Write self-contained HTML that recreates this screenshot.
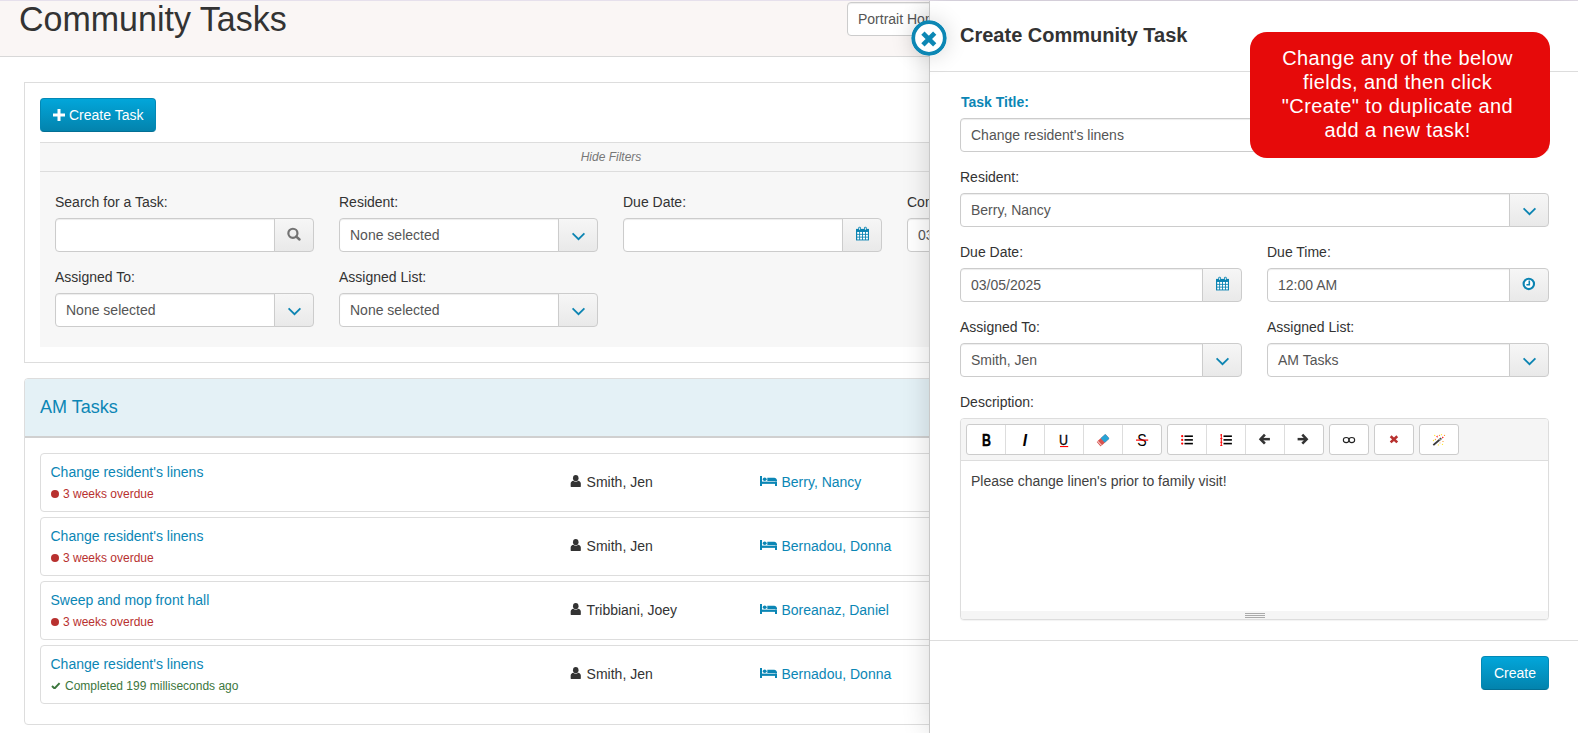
<!DOCTYPE html>
<html lang="en">
<head>
<meta charset="utf-8">
<title>Community Tasks</title>
<style>
*{box-sizing:border-box;margin:0;padding:0}
html,body{width:1578px;height:733px;overflow:hidden;background:#fff}
body{font-family:"Liberation Sans",Arial,Helvetica,sans-serif;font-size:14px;line-height:20px;color:#333;position:relative}
.abs{position:absolute}
.t{position:absolute;white-space:nowrap;line-height:20px}
.lbl{position:absolute;white-space:nowrap;line-height:20px;color:#333}
.inp{position:absolute;height:34px;border:1px solid #ccc;border-radius:4px;background:#fff;color:#555;padding:6px 10px;line-height:20px;white-space:nowrap;overflow:hidden;box-shadow:inset 0 1px 1px rgba(0,0,0,.075)}
.inp.grp{border-radius:4px 0 0 4px}
.addon{position:absolute;height:34px;width:40px;border:1px solid #ccc;border-radius:0 4px 4px 0;background:linear-gradient(#f6f6f6,#e9e9e9)}
.addon svg{position:absolute}
.blue{color:#0b86b5}
#topline{left:0;top:0;width:1578px;height:1px;background:#e6e0ec}
#hdr{left:0;top:1px;width:1578px;height:56px;background:#faf6f5;border-bottom:1px solid #d8d8d8}
#h1{left:19px;top:-1px;font-size:34px;line-height:40px;color:#333;transform:scaleY(1.055);transform-origin:0 31.800px}
#p1{left:24px;top:82px;width:1172px;height:281px;border:1px solid #ddd}
#btn1{left:40px;top:98px;width:116px;height:34px;border-radius:4px;border:1px solid #0388b5;border-bottom-color:#036f94;background:linear-gradient(#02a6da,#0383ad);color:#fff}
#fbar{left:40px;top:142px;width:1140px;height:30px;background:#f7f7f7;border-top:1px solid #ddd;border-bottom:1px solid #ddd}
#fbody{left:40px;top:172px;width:1140px;height:175px;background:#f7f7f7}
#p2{left:24px;top:378px;width:1172px;height:347px;border:1px solid #ddd;border-radius:4px}
#p2h{left:25px;top:379px;width:1170px;height:59px;background:#e4f1f6;border-bottom:2px solid #d0d0d0;border-radius:3px 3px 0 0}
.item{position:absolute;left:40px;width:1140px;height:59px;border:1px solid #ddd;border-radius:4px;background:#fff}
.red{color:#b8312f}
.green{color:#3c763d}
.sm{font-size:12px}
#side{left:929px;top:1px;width:649px;height:732px;background:#fff;border-left:1px solid #c8c8c8;box-shadow:0 0 26px rgba(0,0,0,.16)}
#sideline1{left:930px;top:71px;width:648px;height:1px;background:#ddd}
#sideline2{left:930px;top:640px;width:648px;height:1px;background:#ddd}
#close{left:910.900px;top:20.400px;width:36px;height:36px;border-radius:50%;box-shadow:0 0 22px rgba(0,0,0,.16)}
#callout{left:1250px;top:32px;width:300px;height:126px;border-radius:17px;background:#e60a0a;color:#fff;font-size:20px;line-height:24px;text-align:center;padding:13.900px 5px 0 0;letter-spacing:.41px}
#editor{left:960px;top:418px;width:589px;height:202px;border:1px solid #ddd;border-radius:4px;background:#fff;box-shadow:0 1px 1px rgba(0,0,0,.05)}
#tb{left:961px;top:419px;width:587px;height:42px;background:#f5f5f5;border-bottom:1px solid #ddd;border-radius:3px 3px 0 0}
#rs{left:961px;top:611px;width:587px;height:8px;background:#f5f5f5;border-radius:0 0 3px 3px}
.bg{position:absolute;top:424px;height:31px;border:1px solid #ccc;border-radius:3px;background:#fff;display:flex}
.bg i{display:block;width:39px;height:29px;border-left:1px solid #ddd;position:relative;font-style:normal}
.bg i:first-child{border-left:0;width:38px}
#btn2{left:1481px;top:656px;width:68px;height:34px;border-radius:4px;border:1px solid #0388b5;border-bottom-color:#036f94;background:linear-gradient(#02a6da,#0383ad);color:#fff}
</style>
</head>
<body>
<div class="abs" id="topline"></div>
<div class="abs" id="hdr"></div>
<div class="t" id="h1">Community Tasks</div>
<div class="inp" style="left:847px;top:2px;width:200px">Portrait Homes</div>

<div class="abs" id="p1"></div>
<div class="abs" id="btn1"><span class="t" style="left:28px;top:6px">Create Task</span>
<svg class="abs" style="left:12px;top:10px" width="12" height="12" viewBox="0 0 12 12"><path d="M4.5 0h3v4.5H12v3H7.500V12h-3V7.500H0v-3h4.500z" fill="#fff"/></svg></div>
<div class="abs" id="fbar"></div>
<div class="t" style="left:580.700px;top:147px;font-size:12px;font-style:italic;color:#777">Hide Filters</div>
<div class="abs" id="fbody"></div>

<div class="lbl" style="left:55px;top:192px">Search for a Task:</div>
<div class="inp grp" style="left:55px;top:218px;width:220px"></div>
<div class="addon" style="left:274px;top:218px"><svg style="left:11px;top:7px" width="17" height="17" viewBox="0 0 17 17"><circle cx="6.900" cy="7.300" r="4.550" fill="none" stroke="#737373" stroke-width="2.200"/><path d="M10.300 10.600L13.500 13.500" stroke="#737373" stroke-width="2.500" stroke-linecap="round"/></svg></div>
<div class="lbl" style="left:339px;top:192px">Resident:</div>
<div class="inp grp" style="left:339px;top:218px;width:220px">None selected</div>
<div class="addon" style="left:558px;top:218px"><svg style="left:12px;top:12.600px" width="15" height="9" viewBox="0 0 15 9"><path d="M1.6 1.3L7.500 7.200L13.400 1.3" fill="none" stroke="#0c84b2" stroke-width="1.750"/></svg></div>
<div class="lbl" style="left:623px;top:192px">Due Date:</div>
<div class="inp grp" style="left:623px;top:218px;width:220px"></div>
<div class="addon" style="left:842px;top:218px"><svg style="left:11.600px;top:6.900px" width="15" height="15.400" viewBox="0 0 15 16" preserveAspectRatio="none"><path d="M1 3h13v12H1z" fill="#0c84b2"/><rect x="3.300" y="0.800" width="2.600" height="4" rx="1.200" fill="#0c84b2"/><rect x="9.100" y="0.800" width="2.600" height="4" rx="1.200" fill="#0c84b2"/><rect x="4.100" y="1.700" width="1" height="2.300" fill="#dbeef5"/><rect x="9.900" y="1.700" width="1" height="2.300" fill="#dbeef5"/><g fill="#fff"><rect x="2.200" y="6.200" width="2" height="2"/><rect x="5.100" y="6.200" width="2" height="2"/><rect x="8" y="6.200" width="2" height="2"/><rect x="10.900" y="6.200" width="2" height="2"/><rect x="2.200" y="9.100" width="2" height="2"/><rect x="5.100" y="9.100" width="2" height="2"/><rect x="8" y="9.100" width="2" height="2"/><rect x="10.900" y="9.100" width="2" height="2"/><rect x="2.200" y="12" width="2" height="2"/><rect x="5.100" y="12" width="2" height="2"/><rect x="8" y="12" width="2" height="2"/><rect x="10.900" y="12" width="2" height="2"/></g></svg></div>
<div class="lbl" style="left:907px;top:192px">Completed:</div>
<div class="inp grp" style="left:907px;top:218px;width:220px">03/05/2025</div>

<div class="lbl" style="left:55px;top:267px">Assigned To:</div>
<div class="inp grp" style="left:55px;top:293px;width:220px">None selected</div>
<div class="addon" style="left:274px;top:293px"><svg style="left:12px;top:12.600px" width="15" height="9" viewBox="0 0 15 9"><path d="M1.6 1.3L7.500 7.200L13.400 1.3" fill="none" stroke="#0c84b2" stroke-width="1.750"/></svg></div>
<div class="lbl" style="left:339px;top:267px">Assigned List:</div>
<div class="inp grp" style="left:339px;top:293px;width:220px">None selected</div>
<div class="addon" style="left:558px;top:293px"><svg style="left:12px;top:12.600px" width="15" height="9" viewBox="0 0 15 9"><path d="M1.6 1.3L7.500 7.200L13.400 1.3" fill="none" stroke="#0c84b2" stroke-width="1.750"/></svg></div>

<div class="abs" id="p2"></div>
<div class="abs" id="p2h"></div>
<div class="t blue" style="left:40px;top:396px;font-size:18px;line-height:22px">AM Tasks</div>

<div class="item" style="top:453px"></div>
<div class="t blue" style="left:50.500px;top:462px">Change resident's linens</div>
<div class="abs" style="left:51px;top:490px;width:8px;height:8px;border-radius:50%;background:#b8312f"></div><div class="t red sm" style="left:63px;top:484px">3 weeks overdue</div>
<svg class="abs" style="left:570px;top:475px" width="11.500" height="12" viewBox="0 0 12 13"><ellipse cx="6" cy="3.400" rx="3" ry="3.300" fill="#333"/><path d="M0.500 12.500V9.200C0.500 7.400 1.800 6.300 3.400 6.100C4.100 6.800 5 7.200 6 7.200S7.900 6.800 8.600 6.100C10.200 6.300 11.500 7.400 11.500 9.200V12.500C11.500 12.800 11.300 13 11 13H1C0.700 13 0.500 12.800 0.500 12.500Z" fill="#333"/></svg><div class="t" style="left:586.600px;top:472px">Smith, Jen</div>
<svg class="abs" style="left:760px;top:475.7px" width="17" height="10.300" viewBox="0 0 17 11" preserveAspectRatio="none"><g fill="#0b86b5"><rect x="0" y="0" width="2" height="11"/><rect x="0" y="6" width="17" height="2.400"/><rect x="15" y="6" width="2" height="5"/><circle cx="4.700" cy="3.500" r="1.950"/><path d="M7.300 2H14.300C15.400 2 17 3.600 17 4.600V5.300H7.300Z"/></g></svg><div class="t blue" style="left:781.500px;top:472px">Berry, Nancy</div>
<div class="item" style="top:517px"></div>
<div class="t blue" style="left:50.500px;top:526px">Change resident's linens</div>
<div class="abs" style="left:51px;top:554px;width:8px;height:8px;border-radius:50%;background:#b8312f"></div><div class="t red sm" style="left:63px;top:548px">3 weeks overdue</div>
<svg class="abs" style="left:570px;top:539px" width="11.500" height="12" viewBox="0 0 12 13"><ellipse cx="6" cy="3.400" rx="3" ry="3.300" fill="#333"/><path d="M0.500 12.500V9.200C0.500 7.400 1.800 6.300 3.400 6.100C4.100 6.800 5 7.200 6 7.200S7.900 6.800 8.600 6.100C10.200 6.300 11.500 7.400 11.500 9.200V12.500C11.500 12.800 11.300 13 11 13H1C0.700 13 0.500 12.800 0.500 12.500Z" fill="#333"/></svg><div class="t" style="left:586.600px;top:536px">Smith, Jen</div>
<svg class="abs" style="left:760px;top:539.7px" width="17" height="10.300" viewBox="0 0 17 11" preserveAspectRatio="none"><g fill="#0b86b5"><rect x="0" y="0" width="2" height="11"/><rect x="0" y="6" width="17" height="2.400"/><rect x="15" y="6" width="2" height="5"/><circle cx="4.700" cy="3.500" r="1.950"/><path d="M7.300 2H14.300C15.400 2 17 3.600 17 4.600V5.300H7.300Z"/></g></svg><div class="t blue" style="left:781.500px;top:536px">Bernadou, Donna</div>
<div class="item" style="top:581px"></div>
<div class="t blue" style="left:50.500px;top:590px">Sweep and mop front hall</div>
<div class="abs" style="left:51px;top:618px;width:8px;height:8px;border-radius:50%;background:#b8312f"></div><div class="t red sm" style="left:63px;top:612px">3 weeks overdue</div>
<svg class="abs" style="left:570px;top:603px" width="11.500" height="12" viewBox="0 0 12 13"><ellipse cx="6" cy="3.400" rx="3" ry="3.300" fill="#333"/><path d="M0.500 12.500V9.200C0.500 7.400 1.800 6.300 3.400 6.100C4.100 6.800 5 7.200 6 7.200S7.900 6.800 8.600 6.100C10.200 6.300 11.500 7.400 11.500 9.200V12.500C11.500 12.800 11.300 13 11 13H1C0.700 13 0.500 12.800 0.500 12.500Z" fill="#333"/></svg><div class="t" style="left:586.600px;top:600px">Tribbiani, Joey</div>
<svg class="abs" style="left:760px;top:603.7px" width="17" height="10.300" viewBox="0 0 17 11" preserveAspectRatio="none"><g fill="#0b86b5"><rect x="0" y="0" width="2" height="11"/><rect x="0" y="6" width="17" height="2.400"/><rect x="15" y="6" width="2" height="5"/><circle cx="4.700" cy="3.500" r="1.950"/><path d="M7.300 2H14.300C15.400 2 17 3.600 17 4.600V5.300H7.300Z"/></g></svg><div class="t blue" style="left:781.500px;top:600px">Boreanaz, Daniel</div>
<div class="item" style="top:645px"></div>
<div class="t blue" style="left:50.500px;top:654px">Change resident's linens</div>
<svg class="abs" style="left:51px;top:681.600px" width="9.600" height="7.600" viewBox="0 0 10 8"><path d="M1 4.200L3.700 6.800L9 1.200" fill="none" stroke="#3c763d" stroke-width="2.100"/></svg><div class="t green sm" style="left:65px;top:676px">Completed 199 milliseconds ago</div>
<svg class="abs" style="left:570px;top:667px" width="11.500" height="12" viewBox="0 0 12 13"><ellipse cx="6" cy="3.400" rx="3" ry="3.300" fill="#333"/><path d="M0.500 12.500V9.200C0.500 7.400 1.800 6.300 3.400 6.100C4.100 6.800 5 7.200 6 7.200S7.900 6.800 8.600 6.100C10.200 6.300 11.500 7.400 11.500 9.200V12.500C11.500 12.800 11.300 13 11 13H1C0.700 13 0.500 12.800 0.500 12.500Z" fill="#333"/></svg><div class="t" style="left:586.600px;top:664px">Smith, Jen</div>
<svg class="abs" style="left:760px;top:667.7px" width="17" height="10.300" viewBox="0 0 17 11" preserveAspectRatio="none"><g fill="#0b86b5"><rect x="0" y="0" width="2" height="11"/><rect x="0" y="6" width="17" height="2.400"/><rect x="15" y="6" width="2" height="5"/><circle cx="4.700" cy="3.500" r="1.950"/><path d="M7.300 2H14.300C15.400 2 17 3.600 17 4.600V5.300H7.300Z"/></g></svg><div class="t blue" style="left:781.500px;top:664px">Bernadou, Donna</div>

<div class="abs" id="side"></div>
<div class="abs" id="sideline1"></div>
<div class="abs" id="sideline2"></div>
<div class="t" style="left:960px;top:23.400px;font-size:20px;font-weight:bold;line-height:24px">Create Community Task</div>

<svg class="abs" id="close" viewBox="0 0 36 36" width="36" height="36"><circle cx="18" cy="18" r="15.800" fill="#fff" stroke="#0c87b4" stroke-width="3.800"/><path d="M11.900 13.100L23.700 24.900M23.700 13.100L11.900 24.900" stroke="#0c87b4" stroke-width="4.600"/></svg>
<div class="lbl" style="left:961px;top:92px;font-weight:bold;color:#0b86b5">Task Title:</div>
<div class="inp" style="left:960px;top:118px;width:589px">Change resident's linens</div>
<div class="lbl" style="left:960px;top:167px">Resident:</div>
<div class="inp grp" style="left:960px;top:193px;width:550px">Berry, Nancy</div>
<div class="addon" style="left:1509px;top:193px"><svg style="left:12px;top:12.600px" width="15" height="9" viewBox="0 0 15 9"><path d="M1.6 1.3L7.500 7.200L13.400 1.3" fill="none" stroke="#0c84b2" stroke-width="1.750"/></svg></div>
<div class="lbl" style="left:960px;top:242px">Due Date:</div>
<div class="inp grp" style="left:960px;top:268px;width:243px">03/05/2025</div>
<div class="addon" style="left:1202px;top:268px"><svg style="left:11.600px;top:6.900px" width="15" height="15.400" viewBox="0 0 15 16" preserveAspectRatio="none"><path d="M1 3h13v12H1z" fill="#0c84b2"/><rect x="3.300" y="0.800" width="2.600" height="4" rx="1.200" fill="#0c84b2"/><rect x="9.100" y="0.800" width="2.600" height="4" rx="1.200" fill="#0c84b2"/><rect x="4.100" y="1.700" width="1" height="2.300" fill="#dbeef5"/><rect x="9.900" y="1.700" width="1" height="2.300" fill="#dbeef5"/><g fill="#fff"><rect x="2.200" y="6.200" width="2" height="2"/><rect x="5.100" y="6.200" width="2" height="2"/><rect x="8" y="6.200" width="2" height="2"/><rect x="10.900" y="6.200" width="2" height="2"/><rect x="2.200" y="9.100" width="2" height="2"/><rect x="5.100" y="9.100" width="2" height="2"/><rect x="8" y="9.100" width="2" height="2"/><rect x="10.900" y="9.100" width="2" height="2"/><rect x="2.200" y="12" width="2" height="2"/><rect x="5.100" y="12" width="2" height="2"/><rect x="8" y="12" width="2" height="2"/><rect x="10.900" y="12" width="2" height="2"/></g></svg></div>
<div class="lbl" style="left:1267px;top:242px">Due Time:</div>
<div class="inp grp" style="left:1267px;top:268px;width:243px">12:00 AM</div>
<div class="addon" style="left:1509px;top:268px"><svg style="left:11.300px;top:7.100px" width="16" height="16" viewBox="0 0 16 16"><circle cx="7.800" cy="7.900" r="5.200" fill="#fff" stroke="#0c84b2" stroke-width="2.100"/><path d="M8.300 4.400V8.700H5.400" fill="none" stroke="#0c84b2" stroke-width="1.600"/></svg></div>
<div class="lbl" style="left:960px;top:317px">Assigned To:</div>
<div class="inp grp" style="left:960px;top:343px;width:243px">Smith, Jen</div>
<div class="addon" style="left:1202px;top:343px"><svg style="left:12px;top:12.600px" width="15" height="9" viewBox="0 0 15 9"><path d="M1.6 1.3L7.500 7.200L13.400 1.3" fill="none" stroke="#0c84b2" stroke-width="1.750"/></svg></div>
<div class="lbl" style="left:1267px;top:317px">Assigned List:</div>
<div class="inp grp" style="left:1267px;top:343px;width:243px">AM Tasks</div>
<div class="addon" style="left:1509px;top:343px"><svg style="left:12px;top:12.600px" width="15" height="9" viewBox="0 0 15 9"><path d="M1.6 1.3L7.500 7.200L13.400 1.3" fill="none" stroke="#0c84b2" stroke-width="1.750"/></svg></div>
<div class="lbl" style="left:960px;top:392px">Description:</div>
<div class="abs" id="editor"></div>
<div class="abs" id="tb"></div>
<div class="bg" style="left:966px"><i><svg width="38" height="29" viewBox="0 0 38 29" style="position:absolute;left:0;top:0"><text x="0" y="0" transform="translate(15.100,21.200) scale(0.740,1)" font-family="Liberation Sans,Arial,sans-serif" font-weight="bold" font-size="16.800" fill="#000" stroke="#000" stroke-width="0.400">B</text></svg></i><i><svg width="39" height="29" viewBox="0 0 39 29" style="position:absolute;left:0;top:0"><text x="0" y="0" transform="translate(16.700,21.300) scale(0.920,1)" font-family="Liberation Sans,Arial,sans-serif" font-weight="bold" font-style="italic" font-size="16.800" fill="#000">I</text></svg></i><i><svg width="39" height="29" viewBox="0 0 39 29" style="position:absolute;left:0;top:0"><text x="0" y="0" transform="translate(14,19.900) scale(0.900,1)" font-family="Liberation Sans,Arial,sans-serif" font-size="13.800" fill="#000" stroke="#000" stroke-width="0.350">U</text><rect x="15" y="21" width="8.200" height="1.100" fill="#f00"/></svg></i><i><svg width="39" height="29" viewBox="0 0 39 29" style="position:absolute;left:0;top:0"><g transform="translate(19,15.200) rotate(-42)"><rect x="-5.900" y="-3.100" width="11.800" height="6.200" rx="0.700" fill="#d9534f"/><rect x="-0.400" y="-3.100" width="6.300" height="6.200" rx="0.700" fill="#28a4d6"/><rect x="-5" y="-3.100" width="0.900" height="6.200" fill="#fff" opacity=".85"/></g></svg></i><i><svg width="39" height="29" viewBox="0 0 39 29" style="position:absolute;left:0;top:0"><text x="0" y="0" transform="translate(14.200,20.800) scale(0.880,1)" font-family="Liberation Sans,Arial,sans-serif" font-size="16" fill="#000">S</text><rect x="13" y="14.500" width="12.200" height="1.200" fill="#f00"/></svg></i></div>
<div class="bg" style="left:1167px"><i><svg width="38" height="29" viewBox="0 0 38 29" style="position:absolute;left:0;top:0"><g transform="translate(-1,0)"><g fill="#f00"><circle cx="15.200" cy="11.200" r="1.150"/><circle cx="15.200" cy="14.900" r="1.150"/><circle cx="15.200" cy="18.600" r="1.150"/></g><g fill="#000"><rect x="17.500" y="10.400" width="8.400" height="1.600"/><rect x="17.500" y="14.100" width="8.400" height="1.600"/><rect x="17.500" y="17.800" width="8.400" height="1.600"/></g></g></svg></i><i><svg width="39" height="29" viewBox="0 0 39 29" style="position:absolute;left:0;top:0"><g transform="translate(-1,0)"><rect x="14.800" y="9" width="1" height="12" fill="#f00"/><g fill="#f00"><rect x="14.200" y="9.600" width="1.800" height="0.800"/><rect x="14.200" y="13.200" width="2.200" height="0.800"/><rect x="14.200" y="16.800" width="2.200" height="0.800"/><rect x="14.200" y="20.200" width="2.200" height="0.800"/></g><g fill="#000"><rect x="17.500" y="10.400" width="8.400" height="1.600"/><rect x="17.500" y="14.100" width="8.400" height="1.600"/><rect x="17.500" y="17.800" width="8.400" height="1.600"/></g></g></svg></i><i><svg width="39" height="29" viewBox="0 0 39 29" style="position:absolute;left:0;top:0"><path d="M18.900 9.700L14.600 14.150L18.900 18.600" fill="none" stroke="#333" stroke-width="2.600"/><path d="M14.600 14.150H23.900" stroke="#333" stroke-width="2.500"/></svg></i><i><svg width="39" height="29" viewBox="0 0 39 29" style="position:absolute;left:0;top:0"><path d="M17.300 9.700L21.600 14.150L17.300 18.600" fill="none" stroke="#333" stroke-width="2.600"/><path d="M21.600 14.150H12.600" stroke="#333" stroke-width="2.500"/></svg></i></div>
<div class="bg" style="left:1329px"><i><svg width="38" height="29" viewBox="0 0 38 29" style="position:absolute;left:0;top:0"><ellipse cx="16.200" cy="15.050" rx="2.850" ry="2.600" fill="none" stroke="#222" stroke-width="1.100"/><ellipse cx="21.800" cy="15.050" rx="2.850" ry="2.600" fill="none" stroke="#222" stroke-width="1.100"/></svg></i></div>
<div class="bg" style="left:1374px"><i><svg width="38" height="29" viewBox="0 0 38 29" style="position:absolute;left:0;top:0"><path d="M15.650 11.200L22.250 17.400M22.250 11.200L15.650 17.400" stroke="#b8312f" stroke-width="2.600"/></svg></i></div>
<div class="bg" style="left:1419px"><i><svg width="38" height="29" viewBox="0 0 38 29" style="position:absolute;left:0;top:0"><path d="M13.300 20.100L21.300 13.300" stroke="#3a3a3a" stroke-width="1.900"/><path d="M19.300 15L20.600 13.900" stroke="#999" stroke-width="1.900"/><g fill="#f33"><path d="M16 11.600L17.800 10.600L17.600 12.700Z"/><path d="M22 11.600L24 12.500L22 13.500Z"/></g><g fill="#ffe838"><circle cx="14.700" cy="10.400" r="0.700"/><circle cx="21.500" cy="9.700" r="0.650"/><circle cx="13.500" cy="15.500" r="0.650"/><circle cx="18.400" cy="19.900" r="0.700"/><circle cx="22.500" cy="19.400" r="0.650"/></g><g fill="#f99a3c"><circle cx="19.500" cy="10.400" r="0.650"/><circle cx="24.500" cy="10.400" r="0.650"/><circle cx="15.400" cy="14.500" r="0.650"/><rect x="22.200" y="16.200" width="1.600" height="0.700"/><circle cx="20" cy="18" r="0.800" opacity=".45"/></g></svg></i></div>
<div class="abs" id="rs"></div>
<div class="abs" style="left:1245px;top:613px;width:20px;height:1px;background:#aaa"></div>
<div class="abs" style="left:1245px;top:615px;width:20px;height:1px;background:#aaa"></div>
<div class="abs" style="left:1245px;top:617px;width:20px;height:1px;background:#aaa"></div>
<div class="t" style="left:971px;top:471px;color:#414141">Please change linen's prior to family visit!</div>
<div class="abs" id="callout">Change any of the below<br>fields, and then click<br>"Create" to duplicate and<br>add a new task!</div>
<div class="abs" id="btn2"><span class="t" style="left:12px;top:6px">Create</span></div>
</body>
</html>
